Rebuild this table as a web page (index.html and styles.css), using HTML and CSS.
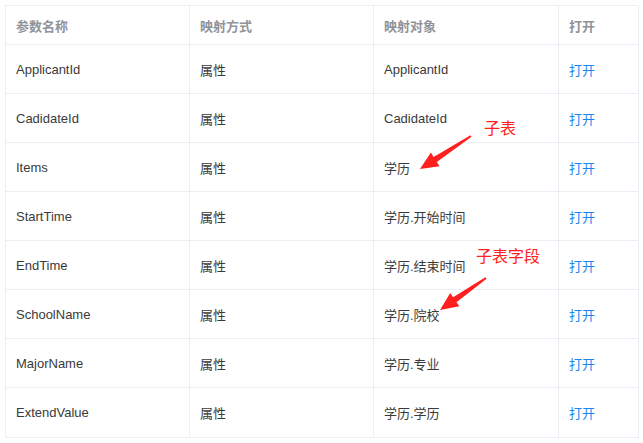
FILE: index.html
```html
<!DOCTYPE html>
<html lang="en">
<head>
    <meta charset="UTF-8">
    <title>参数映射</title>
    <link rel="stylesheet" href="styles.css">
</head>
<body>
    <div class="page">
        <table class="map-table">
            <colgroup>
                <col class="col-name">
                <col class="col-mode">
                <col class="col-target">
                <col class="col-open">
            </colgroup>
            <thead>
                <tr>
                    <th>参数名称</th>
                    <th>映射方式</th>
                    <th>映射对象</th>
                    <th>打开</th>
                </tr>
            </thead>
            <tbody>
                <tr><td>ApplicantId</td><td>属性</td><td>ApplicantId</td><td><a class="link">打开</a></td></tr>
                <tr><td>CadidateId</td><td>属性</td><td>CadidateId</td><td><a class="link">打开</a></td></tr>
                <tr><td>Items</td><td>属性</td><td>学历</td><td><a class="link">打开</a></td></tr>
                <tr><td>StartTime</td><td>属性</td><td>学历.开始时间</td><td><a class="link">打开</a></td></tr>
                <tr><td>EndTime</td><td>属性</td><td>学历.结束时间</td><td><a class="link">打开</a></td></tr>
                <tr><td>SchoolName</td><td>属性</td><td>学历.院校</td><td><a class="link">打开</a></td></tr>
                <tr><td>MajorName</td><td>属性</td><td>学历.专业</td><td><a class="link">打开</a></td></tr>
                <tr><td>ExtendValue</td><td>属性</td><td>学历.学历</td><td><a class="link">打开</a></td></tr>
            </tbody>
        </table>

        <!-- annotations drawn over the table -->
        <svg class="notes" width="643" height="443" viewBox="0 0 643 443">
            <polygon fill="#ff1f1f" points="471.5,136.8 436.8,161.9 439.5,166.2 420,169 430.9,152.6 433.6,156.9 470.5,135.2"/>
            <polygon fill="#ff1f1f" points="486.6,278.8 456.5,302.2 459.4,306.3 440,310 450.2,293.1 453.1,297.2 485.4,277.2"/>
        </svg>
        <span class="note note-table">子表</span>
        <span class="note note-field">子表字段</span>
    </div>
</body>
</html>
```

FILE: styles.css
```css
body {
    margin: 0;
    background-color: #fff;
    font-family: "Liberation Sans", "Noto Sans CJK SC", sans-serif;
    font-size: 13px;
}

.page {
    position: relative;
    width: 643px;
    height: 443px;
    padding: 5px;
    box-sizing: border-box;
}

.map-table {
    border-collapse: collapse;
    table-layout: fixed;
    width: 633px;
}

.col-name { width: 184px; }
.col-mode { width: 184px; }
.col-target { width: 185px; }
.col-open { width: 80px; }

.map-table th,
.map-table td {
    border: 1px solid #ebeef5;
    padding: 0 10px;
    text-align: left;
    white-space: nowrap;
}

.map-table th {
    height: 38px;
    color: #909399;
    font-weight: 600;
}

.map-table td {
    height: 48px;
    color: #3a3a3a;
}

.map-table tbody tr:last-child td {
    height: 49px;
}

.link {
    color: #1a86f0;
    cursor: pointer;
}

/* Annotations */
.notes {
    position: absolute;
    top: 0;
    left: 0;
    pointer-events: none;
}

.note {
    position: absolute;
    color: #ff2020;
    font-size: 16px;
    line-height: 20px;
    font-family: "Noto Sans CJK SC", sans-serif;
}

.note-table {
    left: 484px;
    top: 117px;
}

.note-field {
    left: 476px;
    top: 245px;
}
```
